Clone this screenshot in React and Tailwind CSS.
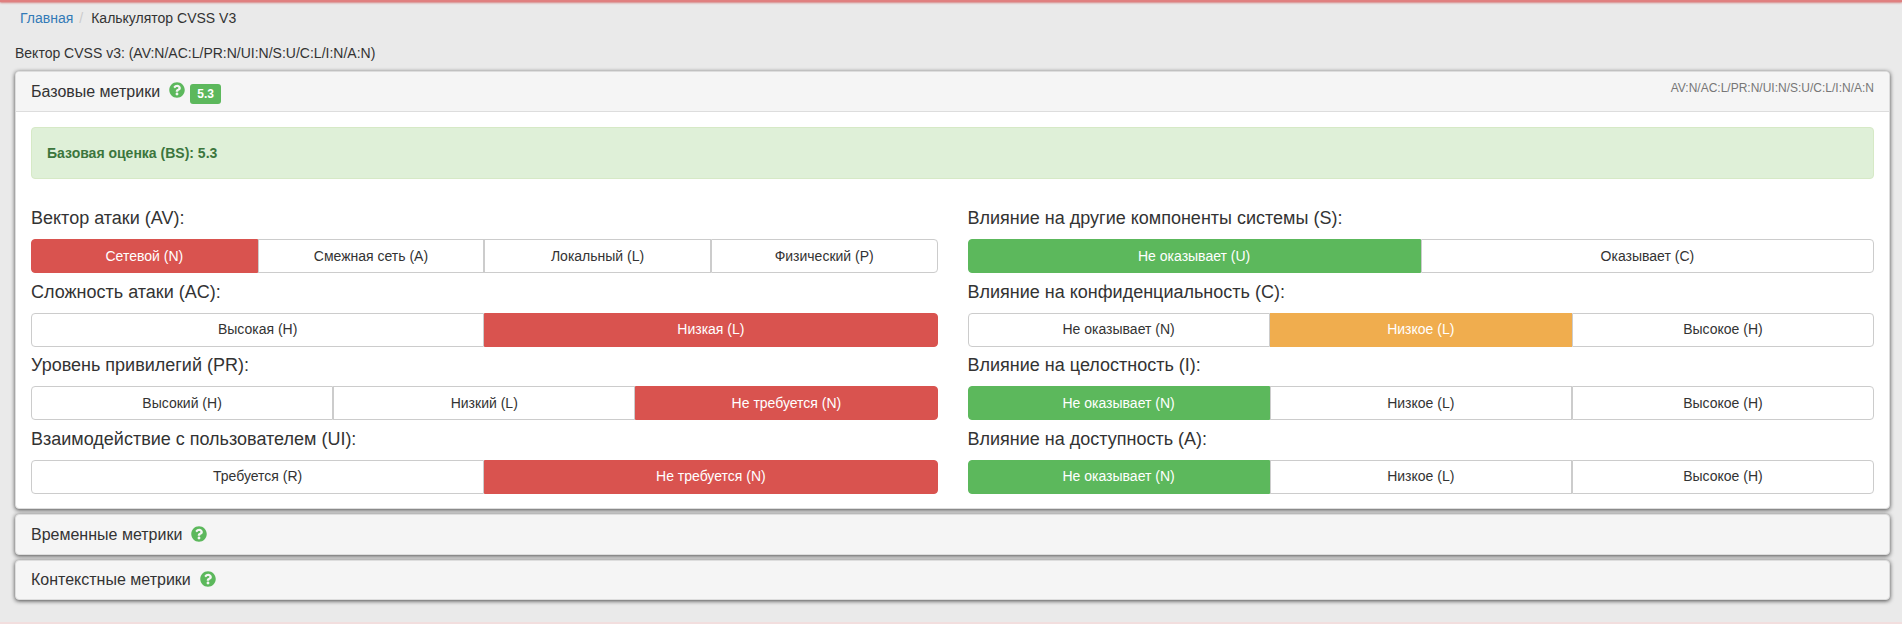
import React from "react";
import { FaQuestionCircle } from "react-icons/fa";

const activeCls = {
  red: "bg-[#d9534f] border-[#d9534f] text-white",
  green: "bg-[#5cb85c] border-[#5cb85c] text-white",
  orange: "bg-[#f0ad4e] border-[#f0ad4e] text-white",
};

function Group({ label, options, active, color }) {
  return (
    <div className="mb-[5.6px]">
      <div className="text-[18px] leading-[26px] mb-2 text-[#333]">{label}</div>
      <div className="flex">
        {options.map((o, i) => (
          <div
            key={o}
            className={
              "flex-1 h-[34px] flex items-center justify-center border text-[14px] " +
              (i === 0 ? "rounded-l-[4px] " : "") +
              (i === options.length - 1 ? "rounded-r-[4px] " : "") +
              (i === active ? activeCls[color] : "bg-white border-[#ccc] text-[#333]")
            }
          >
            {o}
          </div>
        ))}
      </div>
    </div>
  );
}

function Title({ text }) {
  return <span className="text-[16px] text-[#333]">{text}</span>;
}

function Help({ className }) {
  return <FaQuestionCircle className={"text-[#5cb85c] inline-block " + className} size={16} />;
}

const panel = "bg-white rounded-[4px] border border-[#ddd] shadow-[0_1px_4px_rgba(0,0,0,0.7)]";

export default function App() {
  return (
    <div
      className="h-[624px] bg-[#eaeaea] overflow-hidden flex flex-col text-[14px] text-[#333]"
      style={{ fontFamily: '"Liberation Sans", Arial, sans-serif' }}
    >
      <div className="h-[2px] shrink-0 bg-[#e08080] shadow-[0_1px_2px_rgba(200,60,60,0.6)]"></div>
      <div className="flex-1 pl-[15px] pr-[12px]">
        <div className="pl-[5px] pt-[6px] h-[39px] leading-[20px] flex items-start">
          <span className="text-[#337ab7]">Главная</span>
          <span className="text-[#ccc] px-[6px]">/</span>
          <span className="ml-[2px]">Калькулятор CVSS V3</span>
        </div>
        <div className="h-[30px] leading-[24px]">Вектор CVSS v3: (AV:N/AC:L/PR:N/UI:N/S:U/C:L/I:N/A:N)</div>

        <div className={panel + " mb-[5px]"}>
          <div className="bg-[#f5f5f5] border-b border-[#ddd] h-[40px] px-[15px] flex items-start justify-between rounded-t-[4px]">
            <div className="flex items-start">
              <span className="mt-[9px] leading-[22px]"><Title text="Базовые метрики" /></span>
              <Help className="mt-[10px] ml-[9px]" />
              <span className="mt-[12px] ml-[5px] h-[20px] w-[31px] rounded-[3px] bg-[#5cb85c] text-white font-bold text-[12px] flex items-center justify-center">5.3</span>
            </div>
            <span className="mt-[8px] text-[12px] leading-[17px] text-[#777]">AV:N/AC:L/PR:N/UI:N/S:U/C:L/I:N/A:N</span>
          </div>
          <div className="px-[15px] pt-[15px] pb-[9px]">
            <div className="h-[52px] bg-[#dff0d8] border border-[#d6e9c6] rounded-[4px] px-[15px] flex items-center text-[#3c763d] font-bold text-[14px] mb-[26px]">
              Базовая оценка (BS): 5.3
            </div>
            <div className="grid grid-cols-2 gap-x-[30px]">
              <div>
                <Group label="Вектор атаки (AV):" color="red" active={0} options={["Сетевой (N)", "Смежная сеть (A)", "Локальный (L)", "Физический (P)"]} />
                <Group label="Сложность атаки (AC):" color="red" active={1} options={["Высокая (H)", "Низкая (L)"]} />
                <Group label="Уровень привилегий (PR):" color="red" active={2} options={["Высокий (H)", "Низкий (L)", "Не требуется (N)"]} />
                <Group label="Взаимодействие с пользователем (UI):" color="red" active={1} options={["Требуется (R)", "Не требуется (N)"]} />
              </div>
              <div>
                <Group label="Влияние на другие компоненты системы (S):" color="green" active={0} options={["Не оказывает (U)", "Оказывает (C)"]} />
                <Group label="Влияние на конфиденциальность (C):" color="orange" active={1} options={["Не оказывает (N)", "Низкое (L)", "Высокое (H)"]} />
                <Group label="Влияние на целостность (I):" color="green" active={0} options={["Не оказывает (N)", "Низкое (L)", "Высокое (H)"]} />
                <Group label="Влияние на доступность (A):" color="green" active={0} options={["Не оказывает (N)", "Низкое (L)", "Высокое (H)"]} />
              </div>
            </div>
          </div>
        </div>

        <div className={panel + " !bg-[#f5f5f5] h-[41px] px-[15px] flex items-center mb-[5px]"}>
          <Title text="Временные метрики" />
          <Help className="ml-[9px] -mt-[2px]" />
        </div>
        <div className={panel + " !bg-[#f5f5f5] h-[40px] px-[15px] flex items-center"}>
          <Title text="Контекстные метрики" />
          <Help className="ml-[9px] -mt-[2px]" />
        </div>
      </div>
      <div className="h-[2px] shrink-0 bg-[#f2dede]"></div>
    </div>
  );
}
